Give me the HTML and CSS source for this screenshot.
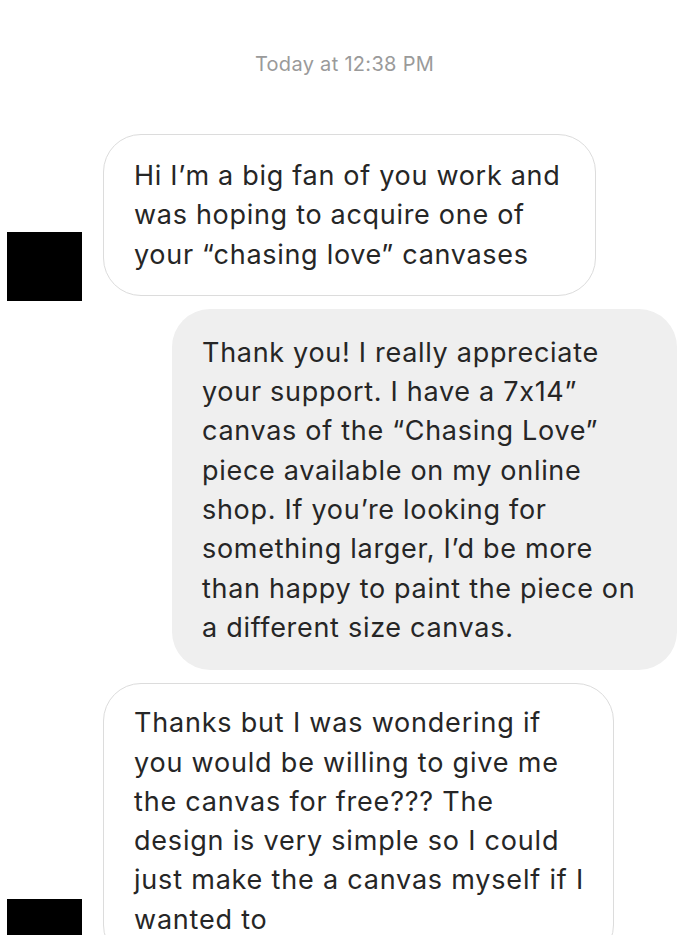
FILE: index.html
```html
<!DOCTYPE html>
<html lang="en">
<head>
    <meta charset="UTF-8">
    <meta name="viewport" content="width=device-width, initial-scale=1.0">
    <title>Messages</title>
    <link rel="stylesheet" href="styles.css">
</head>
<body>

    <div class="thread">
        <div class="stamp">Today at 12:38 PM</div>

        <div class="row row-in">
            <div class="avatar"></div>
            <div class="bubble bubble-in first">Hi I’m a big fan of you work and<br>was hoping to acquire one of<br>your “chasing love” canvases</div>
        </div>

        <div class="row row-out">
            <div class="bubble bubble-out">Thank you! I really appreciate<br>your support. I have a 7x14”<br>canvas of the “Chasing Love”<br>piece available on my online<br>shop. If you’re looking for<br>something larger, I’d be more<br>than happy to paint the piece on<br>a different size canvas.</div>
        </div>

        <div class="row row-in">
            <div class="avatar"></div>
            <div class="bubble bubble-in last">Thanks but I was wondering if<br>you would be willing to give me<br>the canvas for free??? The<br>design is very simple so I could<br>just make the a canvas myself if I<br>wanted to</div>
        </div>
    </div>

</body>
</html>
```

FILE: styles.css
```css
body {
    margin: 0;
    background-color: #fff;
    font-family: Inter, "Noto Sans", Arial, sans-serif;
    color: #262626;
    overflow: hidden;
}
.thread {
    display: flex;
    flex-direction: column;
    padding-top: 52px;
}
.stamp {
    text-align: center;
    font-size: 20px;
    line-height: 24px;
    letter-spacing: 0.3px;
    color: #9a9a9a;
    margin-bottom: 58px;
}
.row {
    display: flex;
    align-items: flex-end;
}
.row + .row {
    margin-top: 13px;
}
.row-out {
    justify-content: flex-end;
    padding-right: 12px;
}
.avatar {
    width: 75px;
    height: 69px;
    background-color: #000;
    margin-left: 7px;
    margin-right: 21px;
    margin-bottom: -5px;
    flex-shrink: 0;
}
.bubble {
    box-sizing: border-box;
    font-size: 27px;
    line-height: 39.3px;
    letter-spacing: 0.7px;
    border-radius: 38px;
    padding: 24px 20px 23px 30px;
    white-space: nowrap;
}
.bubble-in {
    border: 1px solid #dcdcdc;
    background-color: #fff;
}
.bubble-in.first {
    width: 493px;
    padding-top: 21px;
    padding-bottom: 21px;
}
.bubble-in.last {
    width: 511px;
    padding-top: 19px;
    letter-spacing: 0.8px;
}
.bubble-out {
    width: 505px;
    background-color: #efefef;
}
```
